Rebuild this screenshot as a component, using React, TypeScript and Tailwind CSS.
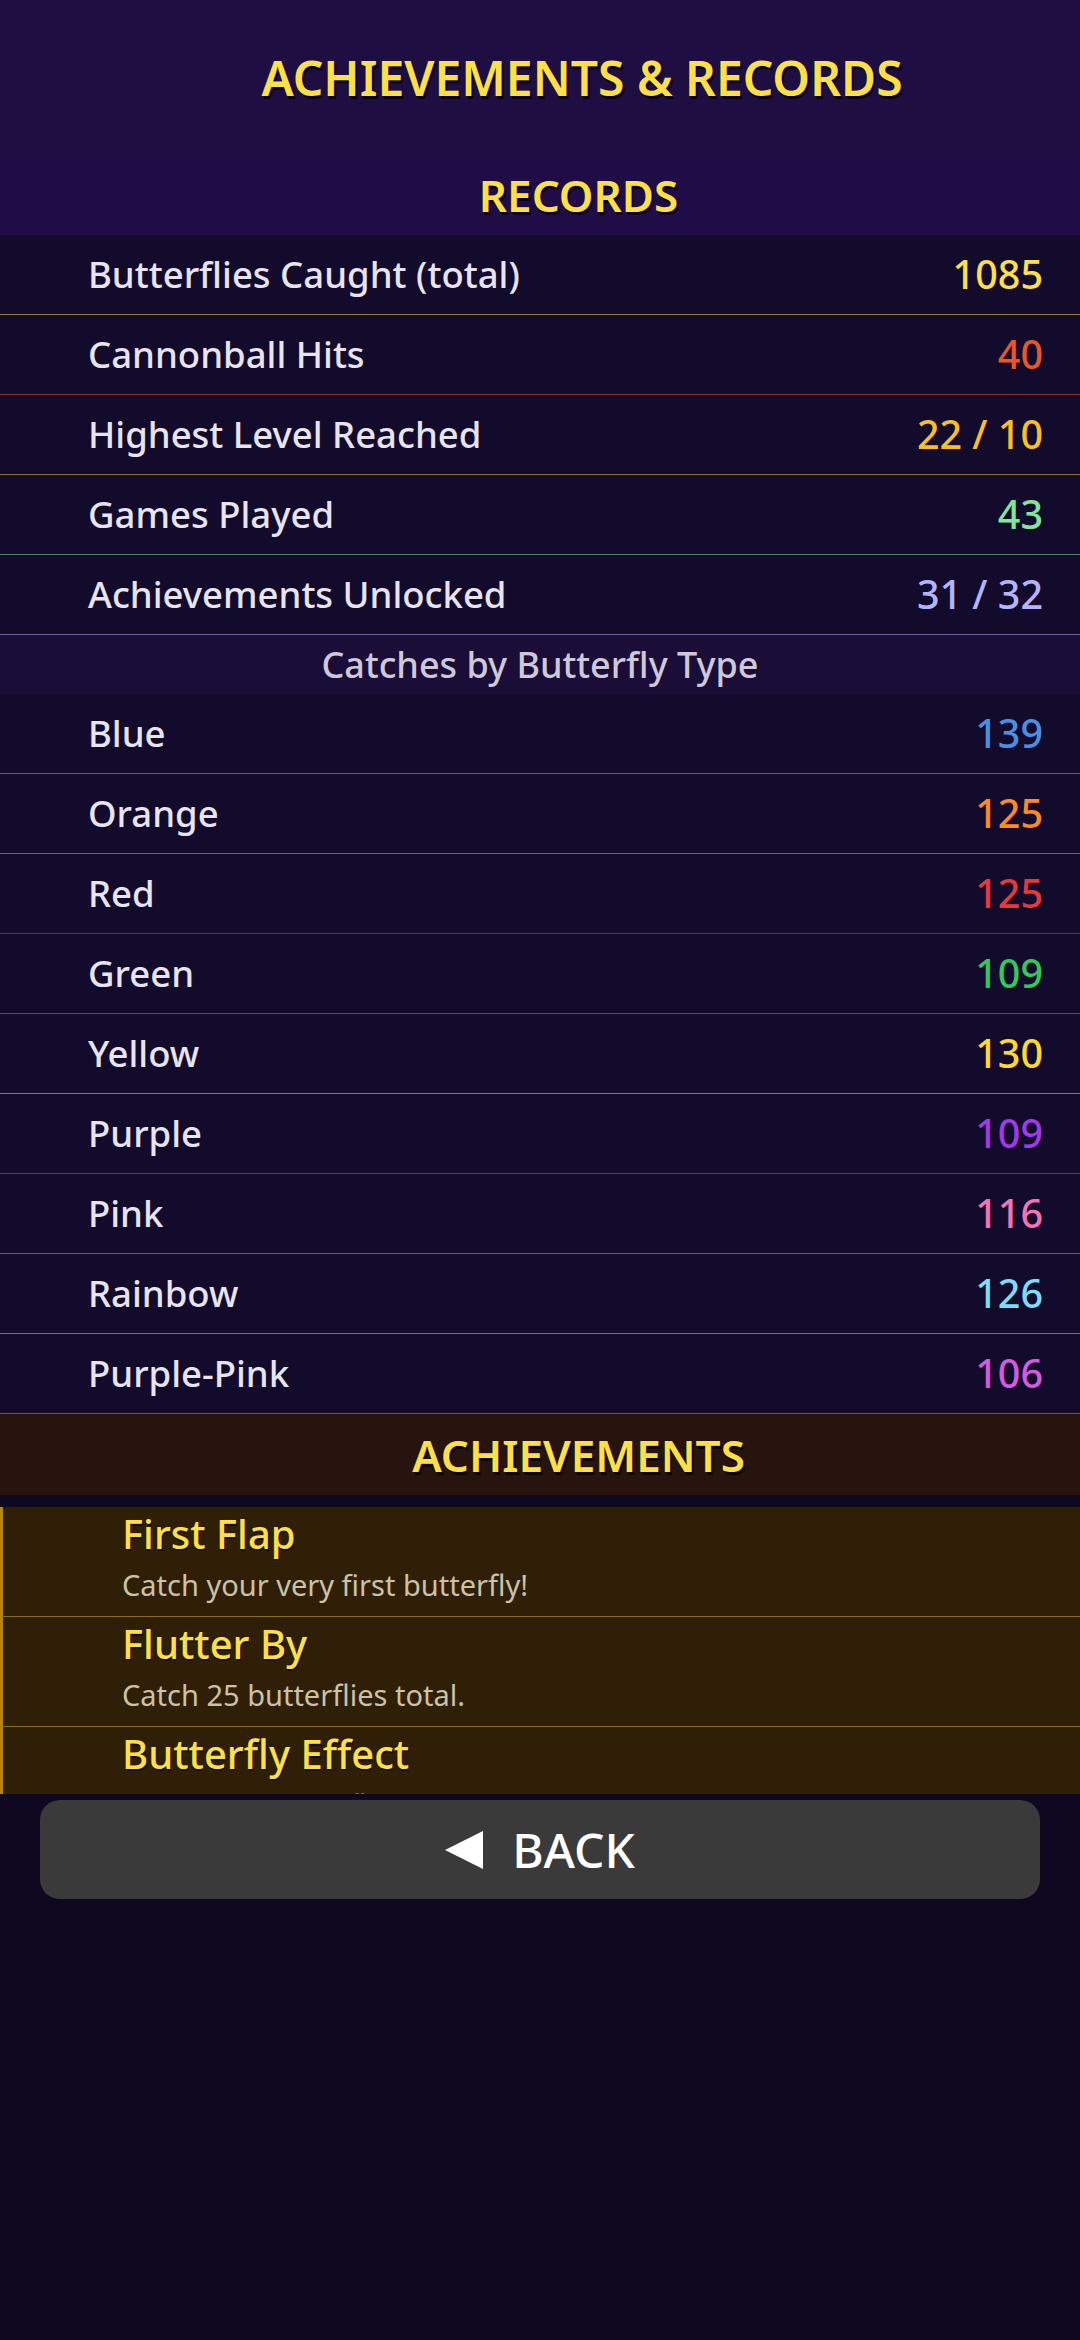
import React from "react";

interface StatRow {
  label: string;
  value: string;
  color: string;
  border: string;
}

const records: StatRow[] = [
  { label: "Butterflies Caught (total)", value: "1085", color: "text-[#fde047]", border: "border-[#fde047]/55" },
  { label: "Cannonball Hits", value: "40", color: "text-[#e8562a]", border: "border-[#e8562a]/55" },
  { label: "Highest Level Reached", value: "22 / 10", color: "text-[#fbbf24]", border: "border-[#fbbf24]/55" },
  { label: "Games Played", value: "43", color: "text-[#86e39a]", border: "border-[#86e39a]/55" },
  { label: "Achievements Unlocked", value: "31 / 32", color: "text-[#b4b4fc]", border: "border-[#b4b4fc]/55" },
];

const types: StatRow[] = [
  { label: "Blue", value: "139", color: "text-[#4a90e2]", border: "border-[#4a90e2]/70" },
  { label: "Orange", value: "125", color: "text-[#fb8a24]", border: "border-[#fb8a24]/60" },
  { label: "Red", value: "125", color: "text-[#e5393b]", border: "border-[#e5393b]/55" },
  { label: "Green", value: "109", color: "text-[#34c75a]", border: "border-[#34c75a]/55" },
  { label: "Yellow", value: "130", color: "text-[#fcd92a]", border: "border-[#fcd92a]/55" },
  { label: "Purple", value: "109", color: "text-[#a238e6]", border: "border-[#a238e6]/60" },
  { label: "Pink", value: "116", color: "text-[#f472b6]", border: "border-[#f472b6]/55" },
  { label: "Rainbow", value: "126", color: "text-[#7fdcf8]", border: "border-[#7fdcf8]/55" },
  { label: "Purple-Pink", value: "106", color: "text-[#d45be0]", border: "border-[#d45be0]/60" },
];

const achievements = [
  { name: "First Flap", desc: "Catch your very first butterfly!" },
  { name: "Flutter By", desc: "Catch 25 butterflies total." },
  { name: "Butterfly Effect", desc: "Catch 100 butterflies across all games." },
];

function Row({ row }: { row: StatRow }) {
  return (
    <div className={`flex items-center justify-between h-[80px] bg-[#130b2b] border-b pl-[88px] pr-[37px] ${row.border}`}>
      <span className="text-[36.5px] font-medium text-[#e8e4ef]">{row.label}</span>
      <span className={`text-[39.5px] font-medium ${row.color}`}>{row.value}</span>
    </div>
  );
}

export default function App() {
  return (
    <div className="min-h-screen bg-[#0e0920] font-['Noto_Sans','Open_Sans',sans-serif]">
      <header className="h-[155px] bg-[#1e0e42] flex items-center justify-center pl-[84px]">
        <h1 className="text-[48px] font-semibold text-[#fde047] [text-shadow:2px_3px_0_rgba(0,0,0,0.65)]">
          ACHIEVEMENTS &amp; RECORDS
        </h1>
      </header>

      <div className="h-[80px] bg-[#200d48] flex items-center justify-center pl-[77px]">
        <h2 className="text-[44px] font-semibold text-[#fde047] [text-shadow:2px_3px_0_rgba(0,0,0,0.65)]">RECORDS</h2>
      </div>
      {records.map((r) => (
        <Row key={r.label} row={r} />
      ))}

      <div className="h-[59px] bg-[#1a0d38] flex items-center justify-center">
        <span className="text-[36px] font-medium text-[#cfc8d8]">Catches by Butterfly Type</span>
      </div>
      {types.map((r) => (
        <Row key={r.label} row={r} />
      ))}

      <div className="h-[81px] bg-[#27140f] flex items-center justify-center pl-[77px]">
        <h2 className="text-[44px] font-semibold text-[#fde047] [text-shadow:2px_3px_0_rgba(0,0,0,0.65)]">ACHIEVEMENTS</h2>
      </div>

      <div className="h-[299px] overflow-hidden pt-3">
        {achievements.map((a) => (
          <div
            key={a.name}
            className="bg-[#2f1f07] border-l-[3px] border-[#b8860b] border-b border-b-[#8a6d22] pl-[119px] pt-[4px] pb-[13px]"
          >
            <div className="text-[40px] leading-[46px] font-medium text-[#fde047] [text-shadow:1px_2px_0_rgba(0,0,0,0.6)]">
              {a.name}
            </div>
            <div className="mt-[10px] text-[29px] leading-[36px] text-[#cbc2a8]">{a.desc}</div>
          </div>
        ))}
      </div>

      <div className="px-[40px] pt-[6px]">
        <button className="w-full h-[99px] rounded-[20px] bg-[#3a3a3a] flex items-center justify-center gap-[29px] text-white">
          <svg width="38" height="38" viewBox="0 0 38 38">
            <polygon points="38,0 0,19 38,38" fill="#ffffff" />
          </svg>
          <span className="text-[48px] font-medium leading-none">BACK</span>
        </button>
      </div>
    </div>
  );
}
